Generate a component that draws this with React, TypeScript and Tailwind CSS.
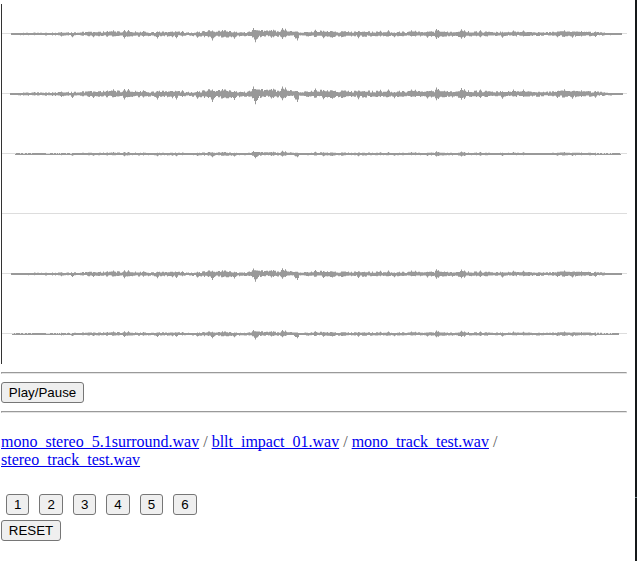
import React from "react";

type Peak = [number, number, number];

// Loudness envelope: position, extent above and extent below the centre line.
const ENVELOPE: Peak[] = [
  [11, 0.8, 0.8], [20, 1.4, 1.5], [35, 1.7, 1.8], [50, 2, 2], [70, 2.1, 2.2], [88, 2.8, 2.8], [100, 3, 3],
  [112, 3.8, 3.4], [130, 3.6, 3.6], [143, 3.6, 3.6], [149, 2.2, 2.8], [160, 3.2, 3.4], [180, 3.2, 3.4],
  [188, 2.2, 2.5], [200, 3, 3.6], [210, 4.8, 4.4], [226, 4.6, 4.3], [240, 2.6, 3.6], [246, 2.2, 2.8],
  [253, 4.8, 4.4], [263, 4.8, 3.6], [278, 4, 3.5], [286, 4.4, 3.6], [300, 2.4, 2.8], [314, 4.3, 3.6],
  [330, 3.8, 4.3], [350, 3.4, 3.5], [370, 3.3, 3.4], [390, 3, 3], [405, 3, 2.8], [420, 3.6, 3.5],
  [440, 3.6, 3.6], [463, 3.7, 3.6], [480, 3.5, 3.2], [500, 2.9, 3], [520, 2.9, 2.8], [545, 2.2, 2.5],
  [562, 3.6, 3.4], [580, 3.3, 3.2], [600, 2.3, 2.3], [612, 1.3, 1.3], [622, 0.8, 0.8],
];

const TRANSIENTS: Peak[] = [
  [34, 2, 1.6], [61, 2.4, 3], [72, 1, 4], [93, 2, 4], [107, 3.6, 3], [113, 4.8, 3], [124, 5, 5.5],
  [128, 5, 3], [143, 3.7, 3.5], [157, 3, 5.5], [172, 3, 4.2], [176, 2, 5.4], [182, 3.8, 3],
  [197, 3, 4.8], [208, 4.8, 4], [212, 4.4, 8], [222, 5, 3.5], [234, 3, 6], [253, 7.4, 4],
  [255, 5, 10.2], [257, 4, 6], [261, 5, 3.5], [271, 5, 4.6], [273, 5.2, 4], [282, 7.6, 6.2],
  [285, 6.5, 4], [295, 3, 5.6], [297, 3, 8], [315, 5.4, 3], [323, 4, 5.2], [332, 3.3, 4.8],
  [358, 3.6, 5.2], [380, 4.2, 3], [388, 4.6, 3], [394, 2, 4.2], [411, 4.6, 3], [415, 4.2, 3],
  [427, 3, 4.6], [436, 6.4, 6.2], [438, 5, 5], [461, 6, 5.8], [464, 4.7, 5], [480, 4.6, 4],
  [502, 2.8, 4.8], [513, 4.5, 2.5], [523, 4.4, 3], [557, 3, 4], [564, 4.8, 3.6],
  [572, 3, 4.8], [581, 3.8, 3], [595, 3, 3.8],
];

const noise = (n: number) => {
  const v = Math.sin(n * 127.1 + 31.7) * 43758.5453;
  return v - Math.floor(v);
};

function extent(x: number, side: 1 | 2): number {
  let i = 0;
  while (i < ENVELOPE.length - 2 && ENVELOPE[i + 1][0] < x) i++;
  const a = ENVELOPE[i];
  const b = ENVELOPE[i + 1];
  const base = a[side] + ((b[side] - a[side]) * (x - a[0])) / (b[0] - a[0]);
  let value = base * (0.45 + 0.6 * noise(Math.floor(x / 1.6) * side + side * 500));
  for (const peak of TRANSIENTS) {
    const distance = Math.abs(peak[0] - x);
    if (distance < 2) value = Math.max(value, peak[side] * (distance ? 0.68 : 1));
  }
  return value;
}

function wavePath(gain: number, start: number, end: number): string {
  let d = "";
  for (let x = start; x < end; x++) {
    const up = Math.max(1, extent(x, 1) * gain);
    const down = Math.max(1, extent(x, 2) * gain);
    const edge = x < 75 || x > 590;
    const quiet = gain < 0.55 && edge && noise(x + 90) < 0.3;
    d += `M${x} ${(30 - (quiet ? 0 : up)).toFixed(2)}h1V${(30 + down).toFixed(2)}h-1z`;
  }
  return d;
}

const CHANNELS = [
  { gain: 0.8, start: 11, end: 622 },
  { gain: 1, start: 10, end: 623 },
  { gain: 0.42, start: 15, end: 621 },
  { gain: 0, start: 0, end: 0 },
  { gain: 0.75, start: 11, end: 622 },
  { gain: 0.53, start: 12, end: 619 },
];

function Button({ children, className = "" }: { children: React.ReactNode; className?: string }) {
  return (
    <button
      className={`block h-[21px] shrink-0 rounded-[3px] border border-[#767676] bg-[#efefef] text-center text-[13.333px] leading-[15px] text-black ${className}`}
      style={{ fontFamily: '"Liberation Sans", Arial, sans-serif' }}
    >
      {children}
    </button>
  );
}

const Rule = () => <hr className="h-[2px] border border-[#e4e4e4] border-t-[#9a9a9a] border-l-[#9a9a9a]" />;

const FileLink = ({ children }: { children: string }) => (
  <a href="#" className="text-[#0000ee] underline [text-decoration-skip-ink:none]">{children}</a>
);

export default function App() {
  return (
    <div
      className="flex h-[561px] w-[637px] overflow-hidden bg-white text-[16px] leading-[18px]"
      style={{ fontFamily: '"Liberation Serif", "Times New Roman", serif' }}
    >
      <main className="ml-px w-[626px] pt-1">
        <div className="flex h-[360px] flex-col border-l border-[#333333]">
          {CHANNELS.map((channel, index) => (
            <svg key={index} className="block h-[60px] w-[625px]" viewBox="2 0 625 60">
              <path d="M2 29h625v1H2z" fill="#dddddd" />
              {channel.gain > 0 && <path d={wavePath(channel.gain, channel.start, channel.end)} fill="#999999" />}
            </svg>
          ))}
        </div>
        <div className="mt-2"><Rule /></div>
        <Button className="my-2 w-[83px]">Play/Pause</Button>
        <Rule />
        <p className="mt-5 w-[500px] text-[#555555]">
          <FileLink>mono_stereo_5.1surround.wav</FileLink> / <FileLink>bllt_impact_01.wav</FileLink> /{" "}
          <FileLink>mono_track_test.wav</FileLink> /<br />
          <FileLink>stereo_track_test.wav</FileLink>
        </p>
        <div className="mt-[25px] ml-[5.05px] flex gap-[10px]">
          {[1, 2, 3, 4, 5, 6].map((n) => (
            <Button key={n} className="w-[23.43px]">{n}</Button>
          ))}
        </div>
        <Button className="mt-[5px] w-[60px]">RESET</Button>
      </main>
      <aside className="ml-auto w-[2px] bg-[#15191b] pt-[497px]">
        <div className="h-px bg-[#718489]" />
      </aside>
    </div>
  );
}
